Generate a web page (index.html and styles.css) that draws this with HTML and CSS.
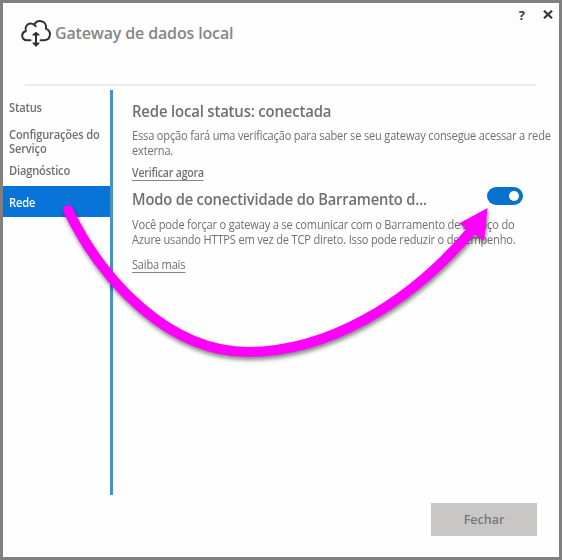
FILE: index.html
```html
<!DOCTYPE html>
<html lang="pt-BR">
<head>
<meta charset="utf-8">
<title>Gateway de dados local</title>
<link rel="stylesheet" href="styles.css">
</head>
<body>
<div class="window">
  <header class="header">
    <div class="brand">
      <svg class="logo" width="32" height="30" viewBox="0 0 32 30" fill="none" stroke="#303030" stroke-width="2" stroke-linecap="round" stroke-linejoin="round">
        <path d="M10.500 21.300H7.200C3.900 21.300 1.800 18.900 2.200 16.100C2.500 13.900 3.900 12.600 5.900 12C4.600 8.300 7 4.700 10.400 4.500C12 4.400 13.200 4.900 14.200 5.800C15.600 3 18.400 1.700 21.200 2.200C24.700 2.900 26.600 6 25.900 9.600C28.700 10.700 30.300 13.200 29.900 16.100C29.500 19.100 27 21.200 23.800 21.300H20.500M14.200 5.800L15.800 7.200"/>
        <path d="M16 15V25"/>
        <path d="M13 16L16 13.500L19 16ZM13 24L16 27L19 24Z" fill="#303030" stroke-width="1.200"/>
      </svg>
      <h1 class="title">Gateway de dados local</h1>
    </div>
    <div class="controls">
      <span class="help">?</span>
      <svg class="close" width="10" height="9" viewBox="0 0 10 9" stroke="#3c3c3c" stroke-width="2.200"><path d="M1 .7L9 8.300M9 .7L1 8.300"/></svg>
    </div>
  </header>
  <div class="main">
    <nav class="nav">
      <a class="item status"><span class="label">Status</span></a>
      <a class="item config"><span class="label">Configurações do<br>Serviço</span></a>
      <a class="item diag"><span class="label">Diagnóstico</span></a>
      <a class="item active"><span class="label">Rede</span></a>
    </nav>
    <section class="content">
      <h2 class="heading network">Rede local status: conectada</h2>
      <p class="text check">Essa opção fará uma verificação para saber se seu gateway consegue acessar a rede<br>externa.</p>
      <a class="link verify">Verificar agora</a>
      <div class="mode-row">
        <h2 class="heading mode">Modo de conectividade do Barramento d...</h2>
        <span class="toggle"><span class="knob"></span></span>
      </div>
      <p class="text info">Você pode forçar o gateway a se comunicar com o Barramento de Serviço do<br>Azure usando HTTPS em vez de TCP direto. Isso pode reduzir o desempenho.</p>
      <a class="link more">Saiba mais</a>
    </section>
  </div>
  <footer class="footer"><button class="button">Fechar</button></footer>
  <svg class="arrow" width="562" height="560" viewBox="0 0 562 560">
    <path d="M68 210C103 283 170 352 248 352C325 352 408 306 472 230" fill="none" stroke="#f0f" stroke-width="10" stroke-linecap="round"/>
    <path d="M487.500 208L459 223.500L484 241Z" fill="#f0f"/>
  </svg>
</div>
</body>
</html>
```
FILE: styles.css
```css
* { box-sizing: border-box; }
body { margin: 0; font-family: "Open Sans", "Noto Sans", sans-serif; color: #707070; }
h1, h2, p { margin: 0; }
.window {
  position: relative;
  display: flex;
  flex-direction: column;
  width: 562px;
  height: 560px;
  border: 3px solid #808080;
  background: #fefefe;
  overflow: hidden;
  white-space: nowrap;
}
.header {
  display: flex;
  justify-content: space-between;
  height: 83px;
  margin: 0 23px 0 22px;
  border-bottom: 2px solid #ececec;
}
.brand { display: flex; padding-top: 15px; margin-left: -5px; }
.logo { flex: none; margin-top: 1px; }
.title { margin-left: 3px; font-size: 16px; line-height: 30px; font-weight: 600; color: #868686; letter-spacing: -.15px; }
.controls { display: flex; gap: 18px; padding-top: 7px; margin-right: -17px; color: #3c3c3c; }
.help { font-size: 13px; line-height: 10px; font-weight: 700; }
.main { display: flex; height: 405px; margin-top: 4px; }
.nav { display: flex; flex: none; flex-direction: column; width: 110px; border-right: 3px solid #4b91bf; }
.item { padding-left: 6px; font-size: 12.200px; line-height: 14.500px; font-weight: 600; letter-spacing: -.2px; }
.label { display: inline-block; transform: scaleX(.915); transform-origin: left; }
.status { margin-top: 11px; }
.config { margin-top: 12px; }
.diag { margin-top: 7px; }
.active { height: 31px; margin-top: 8px; line-height: 33px; background: #0873d8; color: #fff; }
.content { display: flex; flex-direction: column; align-items: flex-start; flex: 1; min-width: 0; padding-left: 18.500px; }
.heading { font-size: 16.500px; line-height: 20px; font-weight: 600; letter-spacing: -.2px; transform-origin: left; }
.network { margin-top: 11px; transform: scaleX(.905); }
.mode { transform: scaleX(.893); }
.text { font-size: 12.200px; line-height: 14.500px; letter-spacing: -.2px; transform: scaleX(.908); transform-origin: left; }
.check { margin-top: 8px; }
.link { font-size: 12.200px; line-height: 14px; letter-spacing: -.2px; border-bottom: 1px solid #858585; transform: scaleX(.905); transform-origin: left; }
.verify { margin-top: 8px; font-weight: 600; transform: scaleX(.864); }
.mode-row { display: flex; width: 391px; justify-content: space-between; margin-top: 8px; }
.toggle { display: flex; flex: none; justify-content: flex-end; align-items: center; width: 36px; height: 18px; margin-top: -2px; padding-right: 4px; border-radius: 9px; background: #0873cf; }
.knob { width: 10px; height: 10px; border-radius: 50%; background: #fff; }
.info { margin-top: 9px; }
.more { margin-top: 10.500px; }
.footer { display: flex; justify-content: flex-end; padding: 8px 22px 0 0; }
.button { width: 106px; height: 33px; padding: 0; border: 0; background: #c8c7c6; color: #777; font: 600 12.500px/33px "Open Sans", sans-serif; }
.arrow { position: absolute; left: -3px; top: -3px; filter: drop-shadow(1px 3px 2px #0007); }
```
